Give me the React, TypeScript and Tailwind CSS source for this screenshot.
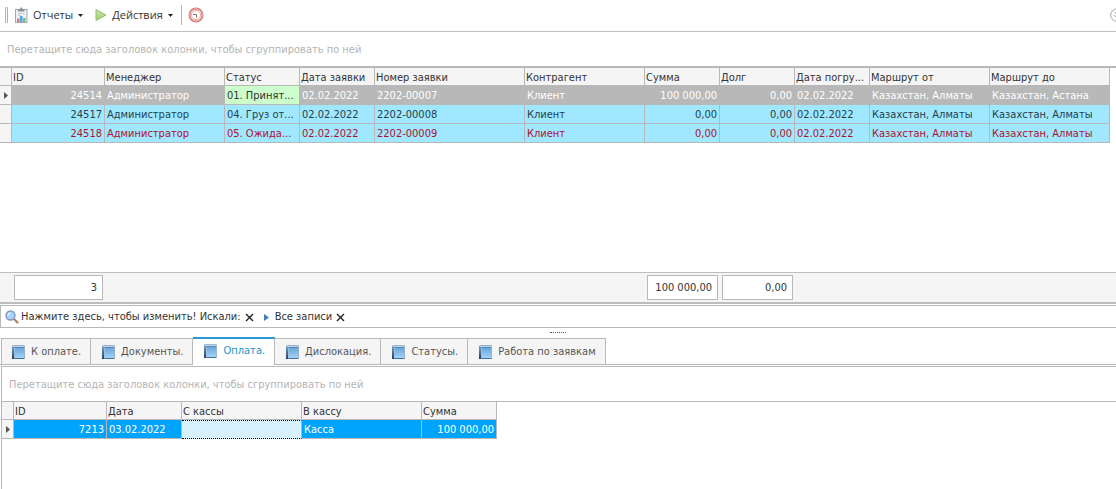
import React, { useState } from 'react';
import clsx from 'clsx';

type Column = { title: string; width: number; right?: boolean };

const ORDER_COLUMNS: Column[] = [
  { title: 'ID', width: 93, right: true },
  { title: 'Менеджер', width: 120 },
  { title: 'Статус', width: 75 },
  { title: 'Дата заявки', width: 75 },
  { title: 'Номер заявки', width: 150 },
  { title: 'Контрагент', width: 120 },
  { title: 'Сумма', width: 75, right: true },
  { title: 'Долг', width: 75, right: true },
  { title: 'Дата погру...', width: 75 },
  { title: 'Маршрут от', width: 120 },
  { title: 'Маршрут до', width: 120 },
];

const ORDERS = [
  {
    row: 'bg-[#b8b8b8] text-white',
    status: 'bg-[#ccffcc] text-[#333333]',
    cells: ['24514', 'Администратор', '01. Принят...', '02.02.2022', '2202-00007', 'Клиент', '100 000,00', '0,00', '02.02.2022', 'Казахстан, Алматы', 'Казахстан, Астана'],
  },
  {
    row: 'bg-[#a0e8ff] text-[#26404c]',
    status: '',
    cells: ['24517', 'Администратор', '04. Груз от...', '02.02.2022', '2202-00008', 'Клиент', '0,00', '0,00', '02.02.2022', 'Казахстан, Алматы', 'Казахстан, Алматы'],
  },
  {
    row: 'bg-[#a0e8ff] text-[#b0102c]',
    status: '',
    cells: ['24518', 'Администратор', '05. Ожида...', '02.02.2022', '2202-00009', 'Клиент', '0,00', '0,00', '02.02.2022', 'Казахстан, Алматы', 'Казахстан, Алматы'],
  },
];

const PAYMENT_COLUMNS: Column[] = [
  { title: 'ID', width: 93, right: true },
  { title: 'Дата', width: 75 },
  { title: 'С кассы', width: 120 },
  { title: 'В кассу', width: 120 },
  { title: 'Сумма', width: 75, right: true },
];

const PAYMENT = ['7213', '03.02.2022', '', 'Касса', '100 000,00'];

const TABS = ['К оплате.', 'Документы.', 'Оплата.', 'Дислокация.', 'Статусы.', 'Работа по заявкам'];

const ReportIcon = () => (
  <svg width="13" height="16" viewBox="0 0 13 16" className="shrink-0" aria-hidden="true">
    <rect x=".5" y="2.500" width="11.500" height="13" fill="#eef0f1" stroke="#a3a9ad" />
    <path d="M3 4.500v-2h2C5 1 5.500.5 6.300.5S7.500 1 7.500 2.500h2v2z" fill="#8b9296" />
    <path d="M3 6.500h6.500M3 8.500h3" stroke="#c5cacd" />
    <rect x="2" y="11.500" width="2.500" height="3.500" fill="#e0736c" />
    <rect x="5" y="9" width="2.500" height="6" fill="#4aa5e0" />
    <rect x="8" y="11" width="2.500" height="4" fill="#6abf7c" />
  </svg>
);

const PlayIcon = () => (
  <svg width="12" height="14" viewBox="0 0 12 14" className="shrink-0" aria-hidden="true">
    <defs>
      <linearGradient id="play" x1="0" y1="0" x2="0" y2="1">
        <stop offset="0" stopColor="#cfe7b2" />
        <stop offset="1" stopColor="#9ccb69" />
      </linearGradient>
    </defs>
    <path d="M1 1.500 11 7 1 12.500z" fill="url(#play)" stroke="#93bf6a" strokeLinejoin="round" />
  </svg>
);

const ClockIcon = () => (
  <svg width="16" height="16" viewBox="0 0 16 16" aria-hidden="true">
    <circle cx="8" cy="8" r="6.500" fill="#fff" stroke="#cf6c6a" strokeWidth="2" />
    <circle cx="8" cy="8" r="6.300" fill="none" stroke="#efb9b7" strokeWidth=".8" />
    <circle cx="8" cy="8" r="4.600" fill="#fff" stroke="#d98583" strokeWidth=".7" />
    <path d="M5 7.500h3.500V10.500" fill="none" stroke="#a66060" />
  </svg>
);

const MoreIcon = () => (
  <svg width="14" height="14" viewBox="0 0 14 14" fill="none" stroke="#a8a8a8" aria-hidden="true">
    <circle cx="7" cy="7" r="6.300" />
    <path d="m4 3.500 3 3 3-3M4 7l3 3 3-3" />
  </svg>
);

const BookIcon = () => (
  <svg width="13" height="15" viewBox="0 0 13 15" className="shrink-0" aria-hidden="true">
    <defs>
      <linearGradient id="book" x1="0" y1="0" x2="0" y2="1">
        <stop offset="0" stopColor="#66a4da" />
        <stop offset="1" stopColor="#a3d4f7" />
      </linearGradient>
      <linearGradient id="spine" x1="0" y1="0" x2="0" y2="1">
        <stop offset="0" stopColor="#6f9cc6" />
        <stop offset="1" stopColor="#263f60" />
      </linearGradient>
    </defs>
    <path d="M0 14V1.500L1 .5h11.500V14z" fill="#3f6c9c" />
    <path d="M1 1.500h11" stroke="#c3d5e6" />
    <rect x="0" y="2" width="2" height="12" fill="url(#spine)" />
    <path d="M2.500 2.500v11" stroke="#9cc0e0" />
    <rect x="3" y="2.500" width="9" height="10.500" fill="url(#book)" />
  </svg>
);

const SearchIcon = () => (
  <svg width="14" height="14" viewBox="0 0 14 14" className="shrink-0" aria-hidden="true">
    <path d="m9 9 3.500 3.500" stroke="#b5835a" strokeWidth="2.200" strokeLinecap="round" />
    <circle cx="5.500" cy="5.500" r="4.500" fill="#a9d2f5" stroke="#7d97c4" strokeWidth="1.400" />
    <path d="M3 5.500A2.500 2.500 0 0 1 5.500 3" fill="none" stroke="#fff" />
  </svg>
);

const CloseIcon = () => (
  <svg width="9" height="9" viewBox="0 0 9 9" aria-hidden="true">
    <path d="m1 1 7 7M8 1 1 8" stroke="#222" strokeWidth="1.400" />
  </svg>
);

const Caret = () => (
  <svg width="5" height="3" viewBox="0 0 5 3" aria-hidden="true">
    <path d="M0 0h5L2.500 3z" fill="#222" />
  </svg>
);

const RowMarker = () => (
  <svg width="4" height="7" viewBox="0 0 4 7" className="mx-auto" aria-hidden="true">
    <path d="M0 0 4 3.500 0 7z" fill="#555" />
  </svg>
);

const GroupPanel = () => (
  <div className="px-[7px] pt-[9px] pb-[7px] leading-[18px] text-[#b4b4b4]">
    Перетащите сюда заголовок колонки, чтобы сгруппировать по ней
  </div>
);

const GridHead: React.FC<{ columns: Column[] }> = ({ columns }) => (
  <>
    <colgroup>
      <col className="w-3" />
      {columns.map(c => <col key={c.title} style={{ width: c.width }} />)}
    </colgroup>
    <thead>
      <tr className="h-[18px] bg-[#f5f5f5] leading-[15px]">
        <td className="border-r border-b border-[#b8b8b8]" />
        {columns.map(c => (
          <th key={c.title} scope="col" className="whitespace-nowrap border-r border-b border-[#b8b8b8] px-px pt-0.5 text-left font-normal">{c.title}</th>
        ))}
      </tr>
    </thead>
  </>
);

const OrdersGrid = () => (
  <table className="w-[1110px] table-fixed border-separate border-spacing-0 leading-[17px]">
    <GridHead columns={ORDER_COLUMNS} />
    <tbody>
      {ORDERS.map((order, i) => (
        <tr key={order.cells[0]} className={clsx('h-[19px]', order.row)}>
          <td className="border-r border-b border-[#b8b8b8] bg-[#f5f5f5]">{i === 0 && <RowMarker />}</td>
          {order.cells.map((cell, c) => (
            <td key={c} className={clsx('whitespace-nowrap border-r border-b border-[#b8b8b8] px-0.5', ORDER_COLUMNS[c].right && 'text-right', c === 2 && order.status)}>
              {cell}
            </td>
          ))}
        </tr>
      ))}
    </tbody>
  </table>
);

const PaymentsGrid = () => (
  <table className="w-[495px] table-fixed border-separate border-spacing-0 leading-[17px]">
    <GridHead columns={PAYMENT_COLUMNS} />
    <tbody>
      <tr className="h-[19px] bg-[#00a4fc] text-white">
        <td className="border-r border-b border-[#b8b8b8] bg-[#f5f5f5]"><RowMarker /></td>
        {PAYMENT.map((cell, c) => (
          <td
            key={c}
            className={clsx(
              'whitespace-nowrap border-r border-b px-0.5',
              PAYMENT_COLUMNS[c].right && 'text-right',
              cell ? 'border-[#b8b8b8]' : 'border-t border-y-black border-r-[#b8b8b8] bg-[#d8f2ff] [border-bottom-style:dotted] [border-top-style:dotted]',
            )}
          >
            {cell}
          </td>
        ))}
      </tr>
    </tbody>
  </table>
);

const Total: React.FC<{ children: React.ReactNode }> = ({ children }) => (
  <div className="mx-0.5 border border-[#b8b8b8] bg-white px-[5px] text-right leading-[23px]">{children}</div>
);

const App: React.FC = () => {
  const [active, setActive] = useState(2);

  return (
    <div className="flex h-screen flex-col overflow-hidden bg-white font-['DejaVu_Sans_Condensed','DejaVu_Sans',sans-serif] text-[11px] text-[#333333]">
      <header className="flex h-8 shrink-0 items-center border-b border-[#c0c0c0] pb-px pl-[5px] font-['Open_Sans','Noto_Sans',sans-serif]">
        <span className="h-4 w-[3px] border-x border-[#b0b0b0]" />
        <button className="ml-[7px] flex items-center gap-[5px]">
          <ReportIcon />
          <span>Отчеты</span>
          <Caret />
        </button>
        <button className="ml-3 flex items-center gap-[5px]">
          <PlayIcon />
          <span>Действия</span>
          <Caret />
        </button>
        <span className="ml-2 mr-1.5 h-5 w-px bg-[#b8b8b8]" />
        <button aria-label="История"><ClockIcon /></button>
        <button aria-label="Ещё" className="-mr-2 ml-auto"><MoreIcon /></button>
      </header>

      <GroupPanel />

      <section className="min-h-0 shrink grow-206 basis-0 overflow-hidden border-t-2 border-[#b8b8b8]">
        <OrdersGrid />
      </section>

      <div className="grid shrink-0 grid-cols-[12px_93px_540px_75px_75px] border-t border-b-2 border-[#bdbdbd] bg-[#f5f5f5] py-0.5">
        <span />
        <Total>3</Total>
        <span />
        <Total>100 000,00</Total>
        <Total>0,00</Total>
      </div>

      <div className="mt-px flex h-[23px] shrink-0 items-center border border-r-0 border-[#b8b8b8] pt-px pl-1">
        <button className="flex items-center gap-0.5">
          <SearchIcon />
          Нажмите здесь, чтобы изменить! Искали:
        </button>
        <button aria-label="Очистить поиск" className="ml-1"><CloseIcon /></button>
        <svg width="5" height="7" viewBox="0 0 5 7" className="ml-2.5" aria-hidden="true">
          <path d="M0 0 5 3.500 0 7z" fill="#3f7fbf" />
        </svg>
        <button className="ml-1.5">Все записи</button>
        <button aria-label="Убрать фильтр" className="ml-1"><CloseIcon /></button>
      </div>

      <div className="flex h-[9px] shrink-0 items-center justify-center">
        <span className="w-4 border-t border-dotted border-[#555]" />
      </div>

      <nav role="tablist" className="flex h-7 shrink-0 items-end border-b border-[#b8b8b8] pl-px">
        {TABS.map((tab, i) => (
          <button
            key={tab}
            role="tab"
            aria-selected={i === active}
            onClick={() => setActive(i)}
            className={clsx(
              'flex items-center gap-1.5 border-r border-[#b8b8b8] pr-[9px]',
              i === 0 ? 'border-l pl-2.5' : 'pl-[11px]',
              i === active ? '-mb-px h-7 border-t-2 border-t-[#2a9ad0] bg-white pb-px text-[#1a94cc]' : 'h-[26px] border-t bg-[#f5f5f5] pt-px text-[#555555]',
            )}
          >
            <BookIcon />
            {tab}
          </button>
        ))}
      </nav>

      <main className="mt-px ml-px flex min-h-0 shrink grow-123 basis-0 flex-col border-t border-l border-[#b8b8b8]">
        <GroupPanel />
        <div className="border-t border-[#b8b8b8]">
          <PaymentsGrid />
        </div>
      </main>
    </div>
  );
};

export default App;
